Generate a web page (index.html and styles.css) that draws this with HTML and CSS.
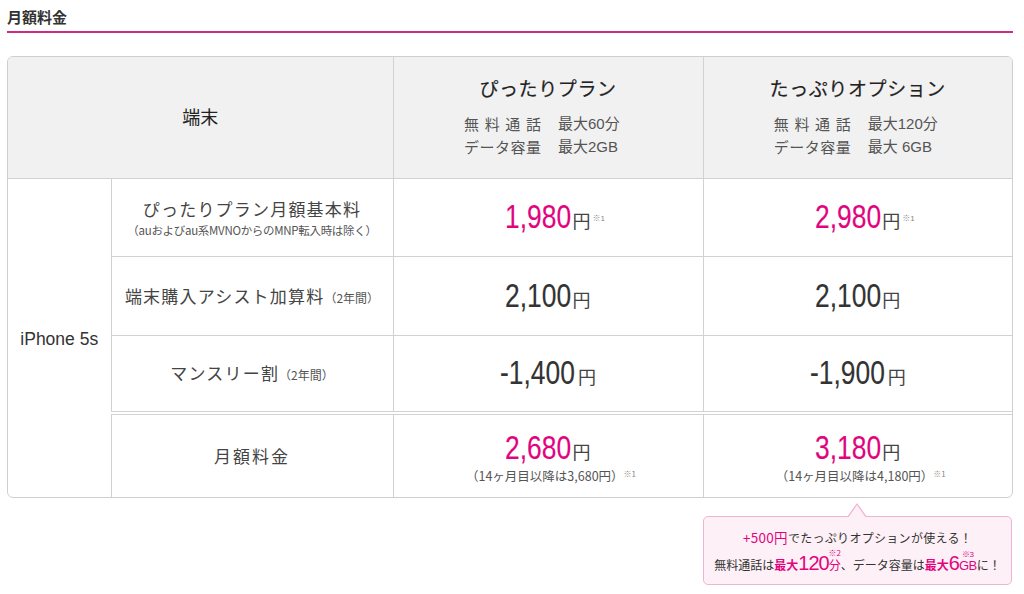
FILE: index.html
```html
<!DOCTYPE html>
<html lang="ja">
<head>
<meta charset="utf-8">
<title>月額料金</title>
<link rel="stylesheet" href="styles.css">
</head>
<body>
<div class="page">
  <h2 class="title">月額料金</h2>
  <div class="table-wrap">
    <table class="price-table">
      <colgroup>
        <col class="c1"><col class="c2"><col class="c3"><col class="c4">
      </colgroup>
      <thead>
        <tr>
          <th colspan="2" class="device-head">端末</th>
          <th class="plan-head">
            <div class="plan-name">ぴったりプラン</div>
            <div class="spec"><span class="spec-label">無料通話</span><span class="spec-val">最大60分</span></div>
            <div class="spec"><span class="spec-label">データ容量</span><span class="spec-val">最大2GB</span></div>
          </th>
          <th class="plan-head">
            <div class="plan-name">たっぷりオプション</div>
            <div class="spec"><span class="spec-label">無料通話</span><span class="spec-val">最大120分</span></div>
            <div class="spec"><span class="spec-label">データ容量</span><span class="spec-val">最大 6GB</span></div>
          </th>
        </tr>
      </thead>
      <tbody>
        <tr class="r1">
          <td rowspan="4" class="device">iPhone 5s</td>
          <td class="label">
            <div class="label-main">ぴったりプラン月額基本料</div>
            <div class="label-note">（auおよびau系MVNOからのMNP転入時は除く）</div>
          </td>
          <td class="price"><span class="amount pink">1,980</span><span class="yen">円</span><span class="mark">※1</span></td>
          <td class="price"><span class="amount pink">2,980</span><span class="yen">円</span><span class="mark">※1</span></td>
        </tr>
        <tr class="r2">
          <td class="label"><span class="label-main">端末購入アシスト加算料</span><span class="label-sub">（2年間）</span></td>
          <td class="price"><span class="amount">2,100</span><span class="yen">円</span></td>
          <td class="price"><span class="amount">2,100</span><span class="yen">円</span></td>
        </tr>
        <tr class="r3">
          <td class="label"><span class="label-main">マンスリー割</span><span class="label-sub">（2年間）</span></td>
          <td class="price"><span class="amount">-1,400</span><span class="yen">円</span></td>
          <td class="price"><span class="amount">-1,900</span><span class="yen">円</span></td>
        </tr>
        <tr class="r4">
          <td class="label"><span class="label-main total-label">月額料金</span></td>
          <td class="price total">
            <div><span class="amount pink">2,680</span><span class="yen">円</span></div>
            <div class="after">（14ヶ月目以降は3,680円）<span class="mark-inline">※1</span></div>
          </td>
          <td class="price total">
            <div><span class="amount pink">3,180</span><span class="yen">円</span></div>
            <div class="after">（14ヶ月目以降は4,180円）<span class="mark-inline">※1</span></div>
          </td>
        </tr>
      </tbody>
    </table>
  </div>
  <div class="callout-row">
    <div class="callout">
      <p class="callout-line1"><span class="pink">+500円</span>でたっぷりオプションが使える！</p>
      <p class="callout-line2">無料通話は<span class="pink strong">最大</span><span class="pink num">120</span><span class="pink with-mark">分<span class="sup">※2</span></span>、データ容量は<span class="pink strong">最大</span><span class="pink num">6</span><span class="pink with-mark gb">GB<span class="sup">※3</span></span>に！</p>
    </div>
  </div>
</div>
</body>
</html>
```

FILE: styles.css
```css
html, body {
  margin: 0;
  padding: 0;
  background: #ffffff;
}

body {
  font-family: "Liberation Sans", "Noto Sans CJK JP", sans-serif;
  color: #333333;
}

.page {
  width: 1006px;
  padding: 0 11px 0 7px;
}

.title {
  margin: 0;
  padding: 7px 0 4px;
  font-size: 15px;
  line-height: 20px;
  font-weight: bold;
  font-family: "Noto Sans CJK JP", sans-serif;
  color: #333333;
  border-bottom: 2px solid #cd2c86;
}

.table-wrap {
  margin-top: 23px;
  border: 1px solid #cfcfcf;
  border-radius: 6px;
  overflow: hidden;
}

.price-table {
  width: 100%;
  table-layout: fixed;
  border-collapse: collapse;
}

.c1 { width: 103px; }
.c2 { width: 282px; }
.c3 { width: 310px; }
.c4 { width: 309px; }

.price-table th,
.price-table td {
  border: 1px solid #d2d2d2;
  padding: 0;
  text-align: center;
  vertical-align: middle;
}

.price-table tr > :first-child { border-left: none; }
.price-table tr > :last-child { border-right: none; }
.price-table thead th { border-top: none; background: #f1f1f1; }
.price-table tbody tr.r4 td { border-bottom: none; }
.price-table td.device { border-bottom: none; }

.price-table thead tr { height: 121px; }
.r1 { height: 78px; }
.r2 { height: 79px; }
.r3 { height: 78px; }
.r4 { height: 84px; }

.r4 td.label,
.r4 td.price {
  border-top: 4px double #d2d2d2;
}

.device-head {
  font-family: "Noto Sans CJK JP", sans-serif;
  font-size: 18px;
  font-weight: normal;
  color: #222222;
  padding-bottom: 2px !important;
}

.plan-head {
  font-weight: normal;
  padding-bottom: 2px !important;
}

.plan-name {
  font-family: "Noto Sans CJK JP", sans-serif;
  font-size: 19px;
  font-weight: normal;
  line-height: 28px;
  letter-spacing: 0.6px;
  color: #222222;
  margin-bottom: 10px;
  -webkit-text-stroke: 0.2px #222222;
}

.spec {
  display: flex;
  justify-content: center;
  gap: 17px;
  font-size: 15px;
  line-height: 23px;
  color: #555555;
  padding-left: 4px;
}

.spec-label {
  width: 77px;
  text-align: justify;
  text-align-last: justify;
  font-family: "Noto Sans CJK JP", sans-serif;
}

.spec-val {
  width: 78px;
  text-align: left;
}

.device {
  font-size: 17.5px;
  color: #333333;
  padding-top: 4px !important;
}

.label {
  font-family: "Noto Sans CJK JP", sans-serif;
  color: #444444;
}

.label-main {
  font-size: 17px;
  letter-spacing: 1.2px;
  line-height: 24px;
}

.label-note {
  font-size: 11.5px;
  line-height: 16px;
  color: #555555;
  letter-spacing: -0.3px;
  margin-top: 1px;
}

.label-sub {
  font-size: 12px;
  color: #555555;
}

.total-label {
  letter-spacing: 2px;
}

.price {
  white-space: nowrap;
}

.amount {
  display: inline-block;
  font-family: "Liberation Sans", sans-serif;
  font-size: 33px;
  line-height: 36px;
  color: #333333;
  transform: scaleX(0.8);
  transform-origin: left center;
  margin-right: -0.5em;
  -webkit-text-stroke: 0.15px currentColor;
}

.pink {
  color: #e2047f;
}

.yen {
  font-family: "Noto Sans CJK JP", sans-serif;
  font-size: 18px;
  color: #444444;
  margin-left: 1px;
}

.mark {
  display: inline-block;
  font-size: 8px;
  color: #888888;
  vertical-align: 7px;
  margin-left: 2px;
  margin-right: -16px;
  width: 14px;
  text-align: left;
}

.total {
  padding-top: 2px !important;
}

.after {
  font-family: "Noto Sans CJK JP", sans-serif;
  font-size: 12.5px;
  line-height: 18px;
  color: #555555;
  margin-top: -1px;
  padding-left: 6px;
}

.mark-inline {
  font-size: 8px;
  color: #888888;
  vertical-align: 4px;
  margin-left: 0;
}

.callout-row {
  display: flex;
  justify-content: flex-end;
  padding-top: 18px;
}

.callout {
  position: relative;
  width: 307px;
  height: 67px;
  margin-right: 1px;
  background: #fdf0f6;
  border: 1px solid #f2b3d2;
  border-radius: 5px;
  text-align: center;
  font-family: "Noto Sans CJK JP", sans-serif;
  color: #333333;
  box-sizing: content-box;
}

.callout::before,
.callout::after {
  content: "";
  position: absolute;
  left: 143px;
  width: 0;
  height: 0;
  border-style: solid;
}

.callout::before {
  top: -14px;
  border-width: 0 10px 14px 10px;
  border-color: transparent transparent #f2b3d2 transparent;
}

.callout::after {
  top: -12px;
  left: 144px;
  border-width: 0 9px 13px 9px;
  border-color: transparent transparent #fdf0f6 transparent;
}

.callout-line1 {
  margin: 10px 0 0;
  font-size: 12px;
  line-height: 20px;
  letter-spacing: 0.3px;
}

.callout-line1 .pink {
  font-size: 13.5px;
}

.callout-line2 {
  margin: 4px 0 0;
  font-size: 12px;
  line-height: 22px;
  white-space: nowrap;
}

.strong {
  font-weight: bold;
}

.num {
  font-family: "Liberation Sans", sans-serif;
  font-size: 20px;
  letter-spacing: -1px;
}

.with-mark {
  position: relative;
}

.gb {
  font-size: 13px;
  font-family: "Liberation Sans", sans-serif;
  letter-spacing: -0.5px;
}

.sup {
  position: absolute;
  left: 50%;
  top: -7px;
  transform: translateX(-50%);
  font-size: 8px;
  line-height: 8px;
  letter-spacing: 0;
}
```
